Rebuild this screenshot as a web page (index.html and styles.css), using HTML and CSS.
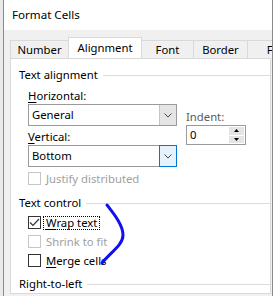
FILE: index.html
```html
<!DOCTYPE html>
<html lang="en">

<head>
    <meta charset="UTF-8">
    <meta name="viewport" content="width=device-width, initial-scale=1.0">
    <title>Format Cells</title>
    <link rel="stylesheet" href="styles.css">
</head>

<body>

    <div class="window">
        <div class="titlebar">Format Cells</div>

        <div class="tabs">
            <div class="tab tab-number">Number</div>
            <div class="tab tab-alignment active">Alignment</div>
            <div class="tab tab-font">Font</div>
            <div class="tab tab-border">Border</div>
            <div class="tab tab-fill">Fill</div>
        </div>

        <div class="panel">
            <div class="group-title"><span>Text alignment</span><i class="rule"></i></div>

            <div class="align-area">
                <div class="col-left">
                    <div class="field-label"><u>H</u>orizontal:</div>
                    <div class="combo">
                        <span class="combo-text">General</span>
                        <span class="combo-btn">
                            <svg width="8" height="5" viewBox="0 0 8 5"><path d="M0.5 0.5 L4 4 L7.5 0.5" fill="none" stroke="#444" stroke-width="1"/></svg>
                        </span>
                    </div>
                    <div class="field-label field-label-v"><u>V</u>ertical:</div>
                    <div class="combo">
                        <span class="combo-text">Bottom</span>
                        <span class="combo-btn hot">
                            <svg width="8" height="5" viewBox="0 0 8 5"><path d="M0.5 0.5 L4 4 L7.5 0.5" fill="none" stroke="#444" stroke-width="1"/></svg>
                        </span>
                    </div>
                    <div class="check-row justify-row disabled">
                        <span class="box"></span><span class="check-label">Justify distributed</span>
                    </div>
                </div>

                <div class="col-right">
                    <div class="field-label indent-label">Indent:</div>
                    <div class="spin">
                        <span class="spin-text">0</span>
                        <span class="spin-btns">
                            <span class="spin-btn"><svg width="5" height="3" viewBox="0 0 5 3"><path d="M0 3 L2.5 0 L5 3 Z" fill="#000"/></svg></span>
                            <span class="spin-btn"><svg width="5" height="3" viewBox="0 0 5 3"><path d="M0 0 L2.5 3 L5 0 Z" fill="#000"/></svg></span>
                        </span>
                    </div>
                </div>
            </div>

            <div class="group-title group-control"><span>Text control</span><i class="rule"></i></div>

            <div class="checks">
                <div class="check-row">
                    <span class="box">
                        <svg width="11" height="11" viewBox="0 0 11 11"><path d="M1 5.5 L4 8.5 L10 2" fill="none" stroke="#333" stroke-width="1.2"/></svg>
                    </span><span class="check-label focused"><u>W</u>rap text</span>
                </div>
                <div class="check-row disabled">
                    <span class="box"></span><span class="check-label">Shrink to fit</span>
                </div>
                <div class="check-row">
                    <span class="box"></span><span class="check-label"><u>M</u>erge cells</span>
                </div>
            </div>

            <div class="group-title group-rtl"><span>Right-to-left</span><i class="rule"></i></div>
        </div>
    </div>

    <!-- blue pen mark drawn over the dialog -->
    <svg class="pen" width="273" height="296" viewBox="0 0 273 296">
        <path d="M107 205 C 114 214, 123 225, 123 235 C 123 245, 111 252, 102 263" fill="none" stroke="#1010f0" stroke-width="3" stroke-linecap="round"/>
    </svg>

</body>

</html>
```

FILE: styles.css
```css
body {
    margin: 0;
    background: #e9e9e9;
    font-family: "Noto Sans", "Open Sans", sans-serif;
    font-size: 11.3px;
    color: #000;
    width: 273px;
    height: 296px;
    overflow: hidden;
}

.window {
    margin-left: 3px;
    width: 270px;
    height: 296px;
    box-sizing: border-box;
    border-left: 1px solid #8a8a8a;
    border-right: 1px solid #8a8a8a;
    background: #f0f0f0;
    display: flex;
    flex-direction: column;
}

.titlebar {
    height: 30px;
    line-height: 30px;
    padding-left: 8px;
    background: #fff;
    font-size: 11.6px;
    flex-shrink: 0;
}

.tabs {
    height: 28px;
    display: flex;
    align-items: flex-end;
    padding-left: 6px;
    overflow: hidden;
    flex-shrink: 0;
}

.tab {
    height: 18px;
    line-height: 18px;
    box-sizing: border-box;
    border: 1px solid #d9d9d9;
    border-bottom: none;
    margin-right: -1px;
    text-align: center;
    background: #f0f0f0;
    flex-shrink: 0;
}

.tab-number { width: 59px; }
.tab-alignment { width: 74px; }
.tab-font { width: 53px; }
.tab-border { width: 55px; }
.tab-fill { width: 54px; }

.tab.active {
    height: 22px;
    line-height: 20px;
    margin-bottom: -1px;
    background: #fff;
    position: relative;
    z-index: 1;
}

.panel {
    flex: 1;
    margin: 0 1px 2px 6px;
    background: #fff;
    border: 1px solid #d9d9d9;
}

.group-title {
    display: flex;
    align-items: center;
    height: 16px;
    line-height: 16px;
    padding-left: 8px;
    margin-top: 8px;
}

.group-title .rule {
    flex: 1;
    height: 1px;
    margin-left: 5px;
    background: #dcdcdc;
}

.align-area {
    display: flex;
    margin-left: 17px;
    padding-top: 5px;
}

.col-left {
    width: 149px;
}

.col-right {
    margin-left: 9px;
    padding-top: 20px;
}

.field-label {
    height: 16px;
    line-height: 16px;
}

.field-label-v {
    height: 19px;
    line-height: 21px;
}

.indent-label {
    height: 17px;
    line-height: 17px;
    color: #5a5a5a;
}

.combo {
    height: 22px;
    box-sizing: border-box;
    border: 1px solid #9a9a9a;
    display: flex;
    align-items: stretch;
}

.combo-text {
    flex: 1;
    padding-left: 3px;
    line-height: 20px;
}

.combo-btn {
    width: 17px;
    box-sizing: border-box;
    background: #e5e5e5;
    border-left: 1px solid #c4c4c4;
    display: flex;
    align-items: center;
    justify-content: center;
}

.combo-btn.hot {
    width: 18px;
    margin: -1px -1px -1px 0;
    background: #e5f1fb;
    border: 1px solid #0078d7;
}

.spin {
    width: 60px;
    height: 20px;
    box-sizing: border-box;
    border: 1px solid #9a9a9a;
    display: flex;
}

.spin-text {
    flex: 1;
    padding-left: 3px;
    line-height: 18px;
}

.spin-btns {
    width: 15px;
    margin: 1px 1px 1px 0;
    display: flex;
    flex-direction: column;
    gap: 1px;
}

.spin-btn {
    flex: 1;
    background: #e5e5e5;
    display: flex;
    align-items: center;
    justify-content: center;
}

.check-row {
    display: flex;
    align-items: center;
    height: 19px;
    margin-left: 17px;
}

.justify-row {
    margin-left: 0;
    margin-top: 2px;
}

.box {
    width: 13px;
    height: 13px;
    box-sizing: border-box;
    border: 1px solid #333;
    background: #fff;
    display: flex;
    align-items: center;
    justify-content: center;
}

.check-label {
    margin-left: 2px;
    padding: 0 2px;
    line-height: 12px;
    border: 1px solid transparent;
}

.check-label.focused {
    border: 1px dotted #000;
}

.disabled .box {
    border-color: #c6c6c6;
}

.disabled .check-label {
    color: #a0a0a0;
}

.group-control {
    margin-top: 7px;
}

.checks {
    margin-top: 2px;
}

.group-rtl {
    margin-top: 6px;
}

u {
    text-underline-offset: 2px;
}

.pen {
    position: absolute;
    left: 0;
    top: 0;
    pointer-events: none;
}
```
